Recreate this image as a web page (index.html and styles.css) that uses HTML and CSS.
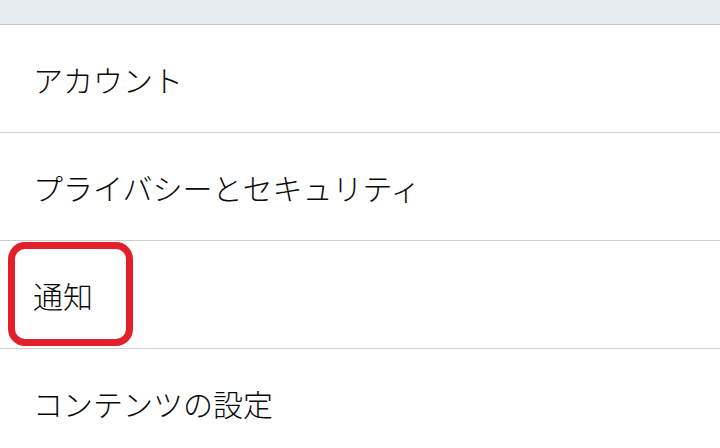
FILE: index.html
```html
<!DOCTYPE html>
<html lang="ja">
<head>
    <meta charset="UTF-8">
    <meta name="viewport" content="width=device-width, initial-scale=1.0">
    <title>設定</title>
    <link rel="stylesheet" href="styles.css">
</head>
<body>
    <div class="topbar"></div>
    <ul class="menu">
        <li class="menu-item"><span class="label">アカウント</span></li>
        <li class="menu-item"><span class="label">プライバシーとセキュリティ</span></li>
        <li class="menu-item highlighted"><span class="label">通知</span></li>
        <li class="menu-item"><span class="label">コンテンツの設定</span></li>
    </ul>
</body>
</html>
```

FILE: styles.css
```css
:root {
    --bar: #e6ebef;
    --surface: #ffffff;
    --text: #0a0a0a;
    --border: #cfcfcf;
    --mark: #e21f2b;
}

*, *::before, *::after {
    margin: 0;
    padding: 0;
    box-sizing: border-box;
}

body {
    background: var(--surface);
    color: var(--text);
    font-family: "Noto Sans CJK JP", "Noto Sans", sans-serif;
    width: 720px;
    height: 448px;
    overflow: hidden;
}

.topbar {
    height: 25px;
    background: var(--bar);
    border-bottom: 1px solid #c4c7ca;
}

.menu {
    list-style: none;
}

.menu-item {
    position: relative;
    height: 108px;
    display: flex;
    align-items: center;
    padding-left: 33px;
    border-bottom: 1px solid var(--border);
}

.label {
    font-size: 30px;
    font-weight: 300;
    line-height: 1;
}

/* red frame drawn over the row */
.highlighted::before {
    content: "";
    position: absolute;
    left: 8px;
    top: 1px;
    width: 125px;
    height: 104px;
    border: 7px solid var(--mark);
    border-radius: 17px;
}
```
